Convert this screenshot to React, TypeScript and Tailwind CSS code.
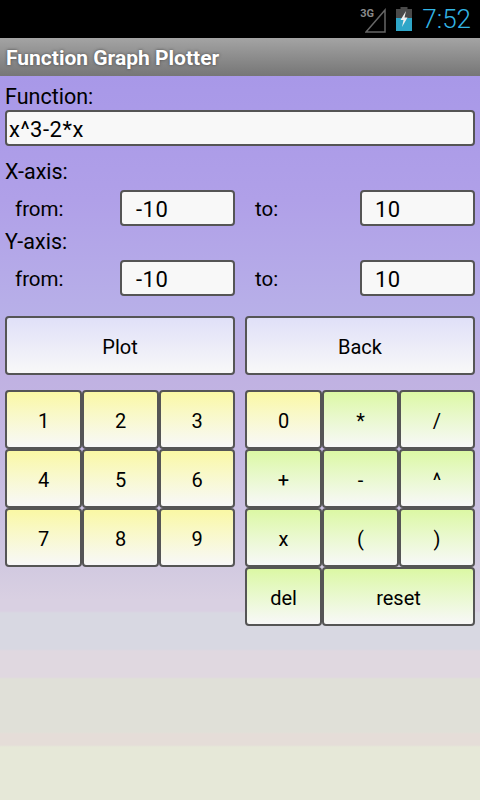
const Key = ({ label, tone, className = "" }: { label: string; tone: "y" | "g" | "b"; className?: string }) => {
  const bg =
    tone === "y"
      ? "from-[#faf8a4] to-[#f8f8f8]"
      : tone === "g"
        ? "from-[#dcf8a4] to-[#f8f8f8]"
        : "from-[#e0e0f8] to-[#f8f8f8]";
  return (
    <div
      className={`flex items-center justify-center rounded-[4px] border-2 border-[#555555] bg-gradient-to-b ${bg} pt-[2px] text-[20px] text-black ${className}`}
    >
      {label}
    </div>
  );
};

const Field = ({ value, className = "" }: { value: string; className?: string }) => (
  <div className={`flex h-[36px] items-center rounded-[4px] border-2 border-[#555555] bg-[#f8f8f8] pt-[2px] text-[22px] tracking-[0.5px] text-black ${className}`}>
    {value}
  </div>
);

const Range = () => (
  <div className="flex h-[36px] items-center">
    <span className="ml-[10px] w-[105px] pt-[2px] text-[20.5px]">from:</span>
    <Field value="-10" className="w-[115px] pl-[14px]" />
    <span className="ml-[20px] w-[105px] pt-[2px] text-[20.5px]">to:</span>
    <Field value="10" className="w-[115px] pl-[13px]" />
  </div>
);

export default function App() {
  return (
    <div
      className="flex h-[800px] w-[480px] flex-col overflow-hidden bg-black text-black"
      style={{ fontFamily: "Roboto, sans-serif" }}
    >
      <div className="flex h-[38px] shrink-0 items-center justify-end bg-black pr-[9px]">
        <div className="relative mr-[10px] h-[32px] w-[27px]">
          <span className="absolute left-[1px] top-[4px] text-[11px] leading-[13px] font-bold text-[#8a8a8a]">3G</span>
          <svg className="absolute left-[6px] top-[5px]" width="21" height="25" viewBox="0 0 21 25">
            <path d="M1 24 L20 2 V24 Z" fill="none" stroke="#666666" strokeWidth="1.5" />
          </svg>
        </div>
        <svg className="mr-[10px]" width="16" height="24" viewBox="0 0 16 24">
          <rect x="4.5" y="0" width="7" height="3" fill="#4a4a4a" />
          <rect x="0" y="2" width="16" height="22" fill="#4a4a4a" />
          <rect x="0" y="11" width="16" height="13" fill="#2ea6c8" />
          <path d="M10 4 L4.5 13 H7.5 L6 20 L11.5 10.5 H8.5 Z" fill="#f0f0f0" />
        </svg>
        <span className="text-[26px] leading-none font-light text-[#33b5e5]">7:52</span>
      </div>
      <div
        className="flex h-[38px] shrink-0 items-center bg-gradient-to-b from-[#a4a4a4] to-[#767676] pt-[4px] pl-[6px] text-[21px] font-bold text-white"
        style={{ textShadow: "0 0 3px rgba(60,60,60,0.9)" }}
      >
        Function Graph Plotter
      </div>
      <div className="flex min-h-0 flex-1 flex-col bg-[linear-gradient(180deg,#a898e8_0px,#b0a0e8_124px,#b8b0e8_240px,#bfb0e2_284px,#c4b8e2_374px,#d0c8e0_484px,#d9d0e2_524px,#d9d0e2_535px,#d8d8e2_537px,#d8d8e2_573px,#e0d8e0_575px,#e0d8e0_601px,#e0e0d8_603px,#e0e0d8_656px,#e5ddd8_658px,#e5ddd8_669px,#e6e8d8_671px,#e6e8d8_724px)] px-[5px]">
        <div className="mt-[8px] h-[26px] text-[21.5px] leading-[26px]">Function:</div>
        <Field value="x^3-2*x" className="pl-[2px]" />
        <div className="mt-[13px] h-[26px] text-[21.5px] leading-[26px]">X-axis:</div>
        <div className="mt-[5px]"><Range /></div>
        <div className="mt-[4px] h-[24px] text-[21.5px] leading-[24px]">Y-axis:</div>
        <div className="mt-[6px]"><Range /></div>
        <div className="mt-[20px] grid h-[59px] grid-cols-[230px_230px] gap-x-[10px]">
          <Key label="Plot" tone="b" />
          <Key label="Back" tone="b" />
        </div>
        <div className="mt-[15px] flex gap-[10px]">
          <div className="grid h-[177px] w-[230px] grid-cols-[77px_77px_76px] grid-rows-3">
            {["1", "2", "3", "4", "5", "6", "7", "8", "9"].map((k) => (
              <Key key={k} label={k} tone="y" />
            ))}
          </div>
          <div className="grid h-[236px] w-[230px] grid-cols-[77px_77px_76px] grid-rows-4">
            <Key label="0" tone="y" />
            {["*", "/", "+", "-", "^", "x", "(", ")", "del"].map((k) => (
              <Key key={k} label={k} tone="g" />
            ))}
            <Key label="reset" tone="g" className="col-span-2" />
          </div>
        </div>
      </div>
    </div>
  );
}
